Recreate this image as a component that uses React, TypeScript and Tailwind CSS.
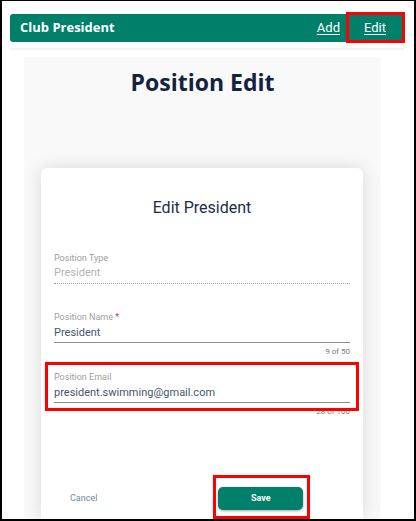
import type * as React from 'react';

const Field: React.FC<{
  label: string;
  value: string;
  required?: boolean;
  readOnly?: boolean;
  counter?: string;
}> = ({ label, value, required, readOnly, counter }) => {
  return (
    <div className="flex flex-col">
      <div className="text-[9px] leading-[10px] text-[#9e9e9e]">
        {label}
        {required && <span className="text-[#e0334c]"> *</span>}
      </div>
      <div
        className={
          readOnly
            ? 'mt-[2px] text-[11px] leading-[16px] text-[#b3b3b3] pb-[2px] border-b border-dotted border-[#9a9a9a]'
            : 'mt-[3px] text-[11px] leading-[16px] text-[#46566a] pb-[1px] border-b border-[#8c8c8c]'
        }
      >
        {value}
      </div>
      {counter && <div className="text-right text-[8px] leading-[16px] text-[#7a7a7a] mt-[1px]">{counter}</div>}
    </div>
  );
};

export default function App() {
  return (
    <div
      className="relative w-[416px] h-[521px] bg-white border-t border-l-2 border-r-2 border-b-2 border-black overflow-hidden flex flex-col pt-[13px] pl-[8px] pr-[9px]"
      style={{ fontFamily: 'Roboto, "Liberation Sans", sans-serif' }}
    >
      <div className="flex items-center h-[28px] rounded-[3px] bg-[#00806b] pl-[10px] pr-[19px] text-white shrink-0">
        <div className="font-bold text-[13px] flex-1" style={{ fontFamily: '"Open Sans", sans-serif' }}>
          Club President
        </div>
        <span className="text-[13px] underline underline-offset-2">Add</span>
        <span className="text-[13px] underline underline-offset-2 ml-[24px]">Edit</span>
      </div>

      <div className="h-[2px] mt-[6px] bg-[#f3f3f3] mr-[1px] shrink-0" />

      <div className="flex flex-col ml-[14px] w-[357px] mt-[7px] flex-1 bg-[#f9f9f9]">
        <h1
          className="text-center font-bold text-[23px] leading-[30px] text-[#13233f] pt-[10px]"
          style={{ fontFamily: '"Open Sans", sans-serif' }}
        >
          Position Edit
        </h1>

        <div className="ml-[17px] w-[322px] mt-[71px] flex-1 rounded-t-[6px] bg-white shadow-[0_0_18px_rgba(0,0,0,0.13)] px-[13px] pt-[30px]">
          <div className="text-center text-[16px] leading-[20px] text-[#1e2d47]">Edit President</div>

          <div className="flex flex-col mt-[35px]">
            <Field label="Position Type" value="President" readOnly />
            <div className="mt-[28px]">
              <Field label="Position Name" value="President" required counter="9 of 50" />
            </div>
            <div className="mt-[12px]">
              <Field label="Position Email" value="president.swimming@gmail.com" counter="28 of 100" />
            </div>
          </div>

          <div className="flex items-center mt-[67px]">
            <button className="text-[9px] text-[#6c8aa2] ml-[16px]">Cancel</button>
            <button className="ml-[121px] w-[85px] h-[23px] rounded-[5px] bg-[#00806b] text-white text-[9px] font-bold shadow-[0_1px_3px_rgba(0,0,0,0.35)]">
              Save
            </button>
          </div>
        </div>
      </div>

      <div className="absolute left-[344px] top-[11px] w-[59px] h-[31px] border-[3px] border-[#ff0000]" />
      <div className="absolute left-[43px] top-[361px] w-[314px] h-[49px] border-[3px] border-[#ff0000]" />
      <div className="absolute left-[211px] top-[474px] w-[97px] h-[44px] border-[3px] border-[#ff0000]" />
    </div>
  );
}
